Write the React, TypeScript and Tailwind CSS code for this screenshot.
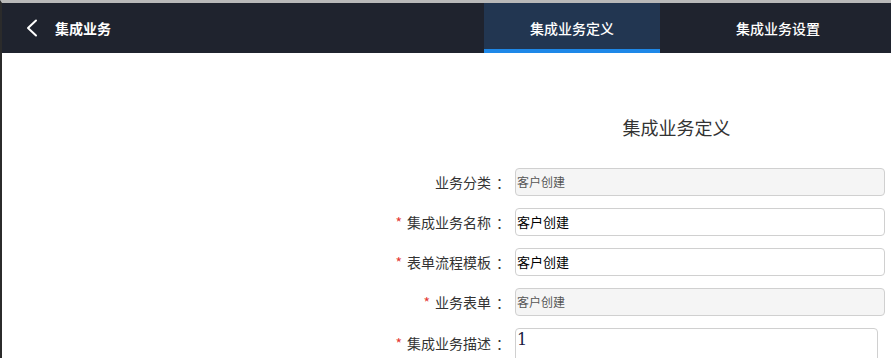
const font = { fontFamily: '"Noto Sans CJK SC", "Liberation Sans", sans-serif' };

type Row = { label: string; value: string; required?: boolean; disabled?: boolean };

const rows: Row[] = [
  { label: '业务分类', value: '客户创建', disabled: true },
  { label: '集成业务名称', value: '客户创建', required: true },
  { label: '表单流程模板', value: '客户创建', required: true },
  { label: '业务表单', value: '客户创建', required: true, disabled: true },
];

function Label({ text, required, className = '' }: { text: string; required?: boolean; className?: string }) {
  return (
    <label className={'w-[135px] shrink-0 flex justify-end text-[14px] text-[#333] ' + className}>
      {required && <span className="text-[#e53935] mr-[5px]">*</span>}
      <span>{text}</span>
      <span className="w-[24px] text-center">：</span>
    </label>
  );
}

export default function App() {
  return (
    <div
      className="w-[891px] h-[358px] overflow-hidden bg-white border-t-[3px] border-t-[#b9b9b9] border-l-2 border-l-[#2b2b2b]"
      style={font}
    >
      {/* Header */}
      <header className="h-[50px] bg-[#1f232e] flex items-stretch">
        <div className="flex items-center w-[482px] shrink-0">
          <svg width="12" height="18" viewBox="0 0 12 18" className="ml-[24px]" fill="none">
            <polyline points="10,1.5 2,9 10,16.5" stroke="white" strokeWidth="2" strokeLinecap="round" strokeLinejoin="round" />
          </svg>
          <span className="ml-[17px] text-white text-[14px] font-bold">集成业务</span>
        </div>
        <div className="w-[176px] shrink-0 bg-[#223651] flex items-center justify-center border-b-4 border-[#1e88e8] text-white text-[14px] font-medium pt-1">
          集成业务定义
        </div>
        <div className="w-[236px] shrink-0 flex items-center justify-center text-white text-[14px] font-medium">
          集成业务设置
        </div>
      </header>

      {/* Form */}
      <main className="flex">
        <div className="w-[378px] shrink-0" />
        <div className="flex-1 pr-[6px]">
          <h2 className="text-[18px] text-[#333] text-center pl-[88px] mt-[61px] leading-[26px]">
            集成业务定义
          </h2>
          <div className="mt-[28px] flex flex-col gap-[12px]">
            {rows.map((r) => (
              <div key={r.label} className="flex items-center">
                <Label text={r.label} required={r.required} />
                <div
                  className={
                    'flex-1 h-[28px] rounded-[4px] border border-[#d0d0d0] flex items-center px-[1px] ' +
                    (r.disabled ? 'bg-[#f5f5f5] text-[#555] text-[12px]' : 'bg-white text-black text-[13px]')
                  }
                >
                  {r.value}
                </div>
              </div>
            ))}
            <div className="flex items-start">
              <Label text="集成业务描述" required className="pt-[5px]" />
              <div
                className="w-[363px] h-[60px] rounded-[4px] border border-[#d0d0d0] px-[1px] text-[16px] text-[#1a1a40] leading-[22px]"
                style={{ fontFamily: '"DejaVu Serif", serif' }}
              >
                1
              </div>
            </div>
          </div>
        </div>
      </main>
    </div>
  );
}
